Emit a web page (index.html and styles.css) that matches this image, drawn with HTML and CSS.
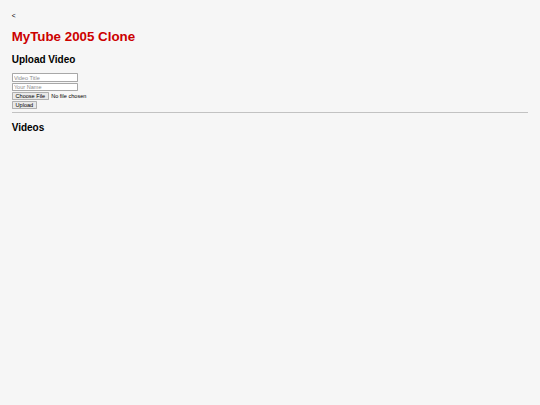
FILE: index.html
```html
<!DOCTYPE html>
<html lang="en">
<head>
<meta charset="utf-8">
<title>MyTube 2005 Clone</title>
<link rel="stylesheet" href="styles.css">
</head>
<body>
<div class="page">
  <div class="back">&lt;</div>
  <h1 class="title">MyTube 2005 Clone</h1>
  <h2 class="section-title">Upload Video</h2>
  <form class="upload-form">
    <input class="field" type="text" placeholder="Video Title">
    <input class="field" type="text" placeholder="Your Name">
    <input class="file" type="file">
    <button class="btn" type="button">Upload</button>
  </form>
  <hr class="divider">
  <h2 class="section-title section-title--videos">Videos</h2>
  <div class="video-list"></div>
</div>
</body>
</html>
```

FILE: styles.css
```css
html, body {
  margin: 0;
  padding: 0;
  background: #f6f6f6;
}
body {
  font-family: "Liberation Sans", Arial, Helvetica, sans-serif;
  color: #000;
  min-height: 405px;
}
.page {
  zoom: 0.417;
  padding: 28px;
  font-size: 16px;
}
.back {
  font-size: 16px;
  line-height: 18px;
}
.title {
  color: #cc0000;
  font-size: 32px;
  margin: 24px 0;
}
.section-title {
  font-size: 24px;
  margin: 19.92px 0;
}
.section-title--videos {
  margin-top: 21px;
}
.upload-form {
  margin: 0;
  display: flex;
  flex-direction: column;
  align-items: flex-start;
  row-gap: 0.7px;
}
.field {
  font-family: "Liberation Sans", Arial, sans-serif;
  font-size: 13.33px;
  width: 158px;
  height: 21px;
  box-sizing: border-box;
  padding: 1px 3px;
  border: 1px solid #a8a8a8;
  border-radius: 2px;
  background: #fff;
}
.field::placeholder {
  color: #8c8c8c;
}
.file {
  font-family: "Liberation Sans", Arial, sans-serif;
  font-size: 13.33px;
  height: 21px;
  color: #000;
}
.file::file-selector-button {
  font-family: "Liberation Sans", Arial, sans-serif;
  font-size: 13.33px;
  height: 21px;
  padding: 1px 7px;
  margin-right: 5px;
  border: 1px solid #b0b0b0;
  border-radius: 2px;
  background: #e9e9e9;
  color: #000;
}
.btn {
  font-family: "Liberation Sans", Arial, sans-serif;
  font-size: 13.33px;
  height: 21px;
  padding: 1px 7px;
  border: 1px solid #b0b0b0;
  border-radius: 2px;
  background: #e9e9e9;
  color: #000;
}
.divider {
  margin: 6px 0 8px;
  height: 0;
  border: 0;
  border-top: 2px solid #c2c2c2;
}
```
